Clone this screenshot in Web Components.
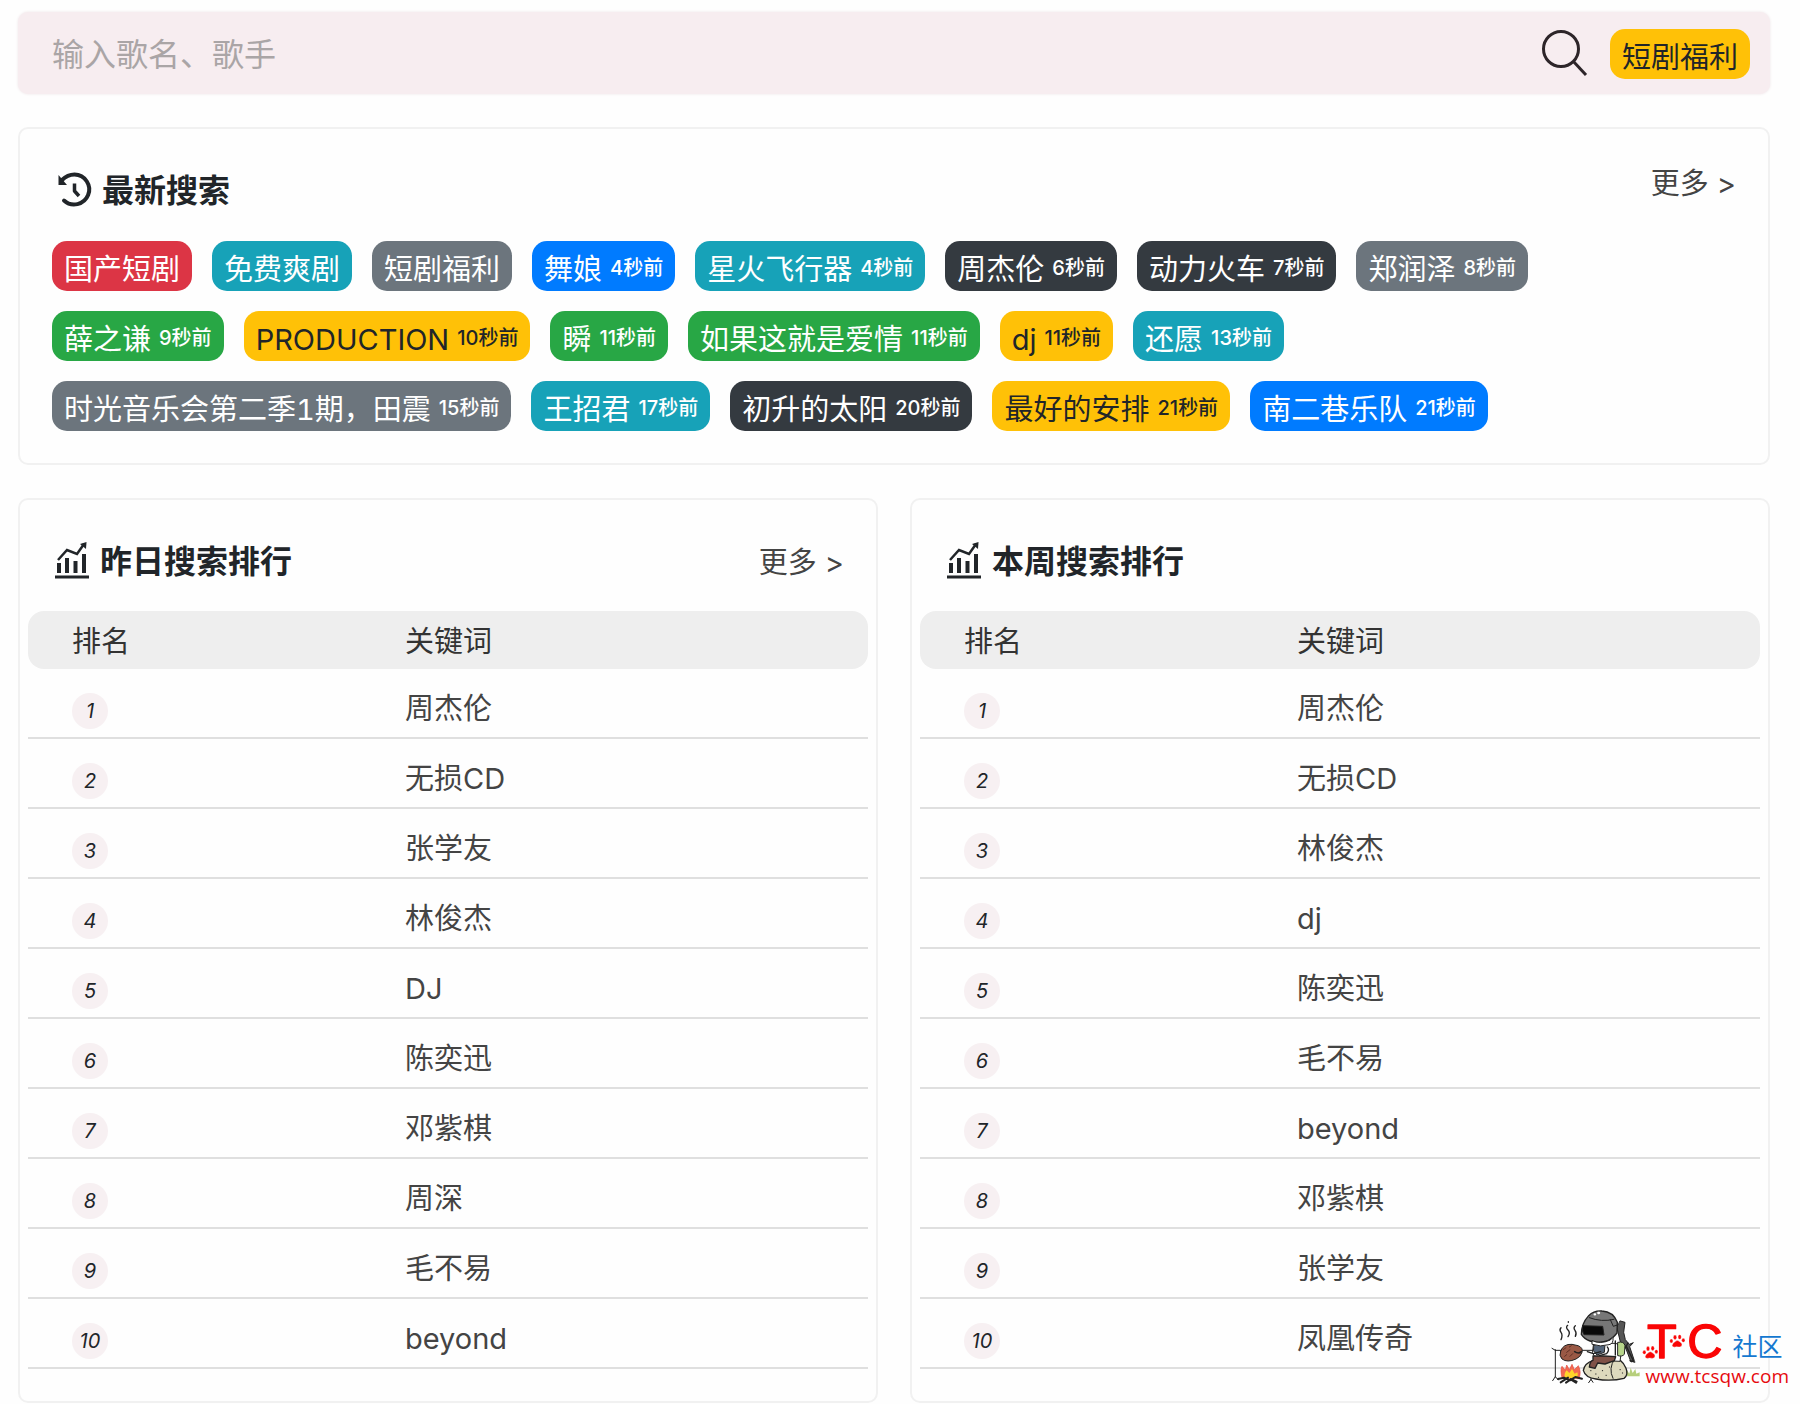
<!DOCTYPE html>
<html lang="zh-CN">
<head>
<meta charset="utf-8">
<meta name="viewport" content="width=device-width, initial-scale=1">
<title>音乐搜索</title>
<style>
  body {
    margin: 0;
    background: #fefefe;
    color: #212529;
    font: 29px/40px Inter, "Noto Sans CJK SC", sans-serif;
  }
</style>
</head>
<body>
<music-page></music-page>

<template id="t-page">
  <style>
    :host { display: block; position: relative; padding: 12px 30px 2px 18px; }
    main { display: flex; flex-direction: column; gap: 33px; }
    .ranks { display: grid; grid-template-columns: 1fr 1fr; gap: 32px; }
    .tags { display: flex; flex-wrap: wrap; row-gap: 20px; }
    site-mark { position: absolute; right: 11px; bottom: 17px; }
  </style>
  <main>
    <search-bar></search-bar>
    <panel-card heading="最新搜索" icon="history" more>
      <div class="tags"></div>
    </panel-card>
    <div class="ranks">
      <panel-card heading="昨日搜索排行" icon="chart" more flush>
        <rank-table items="周杰伦|无损CD|张学友|林俊杰|DJ|陈奕迅|邓紫棋|周深|毛不易|beyond"></rank-table>
      </panel-card>
      <panel-card heading="本周搜索排行" icon="chart" flush>
        <rank-table items="周杰伦|无损CD|林俊杰|dj|陈奕迅|毛不易|beyond|邓紫棋|张学友|凤凰传奇"></rank-table>
      </panel-card>
    </div>
  </main>
  <site-mark></site-mark>
</template>

<template id="t-search">
  <style>
    :host { display: block; }
    form {
      display: flex; align-items: center; box-sizing: border-box; height: 82px;
      padding: 2px 20px 0 34px; border-radius: 10px; background: #f7edf0;
      box-shadow: 0 0 3px #eee4e7;
    }
    input {
      flex: 1; min-width: 0; padding: 2px 0 0; border: 0; outline: 0; background: none;
      color: #212529; font: inherit; font-size: 32px; line-height: 48px;
    }
    input::placeholder { color: #aaa5a6; opacity: 1; }
    button { display: block; margin: 0 22px 0 0; padding: 0; border: 0; background: none; cursor: pointer; }
    svg { display: block; width: 48px; height: 48px; }
    tag-chip { margin-right: 0; }
  </style>
  <form onsubmit="return false">
    <input type="text" placeholder="输入歌名、歌手" aria-label="输入歌名、歌手">
    <button type="submit" aria-label="搜索">
      <svg viewBox="0 2 48 48" fill="none" stroke="#2d2529" stroke-width="3">
        <circle cx="21" cy="21" r="17.500"/><path d="M33 33 46 47"/>
      </svg>
    </button>
    <tag-chip color="yellow">短剧福利</tag-chip>
  </form>
</template>

<template id="t-chip">
  <style>
    :host { display: block; margin-right: 20px; }
    a {
      display: flex; align-items: center; gap: 8px; box-sizing: border-box; height: 50px;
      padding: 7px 12px 0; border-radius: 15px; color: #fff; text-decoration: none; white-space: nowrap;
    }
    span { font-variant-numeric: tabular-nums; }
    small { font-size: 20px; font-weight: 500; line-height: 40px; padding-bottom: 4px; }
    :host([color=red]) a { background: #dc3545; }
    :host([color=teal]) a { background: #17a2b8; }
    :host([color=gray]) a { background: #6c757d; }
    :host([color=blue]) a { background: #007bff; }
    :host([color=dark]) a { background: #343a40; }
    :host([color=green]) a { background: #28a745; }
    :host([color=yellow]) a { background: #ffc107; color: #212529; }
  </style>
  <a href="#"><span><slot></slot></span></a>
</template>

<template id="t-card">
  <style>
    :host {
      display: block; box-sizing: border-box; padding: 39px 32px 32px; border: 2px solid #f1f1f1;
      border-radius: 10px; background: #fefefe;
    }
    header { display: flex; align-items: flex-start; justify-content: space-between; margin-bottom: 27px; }
    h2 { display: flex; align-items: center; margin: 0; font-size: 32px; font-weight: 700; line-height: 46px; }
    svg { display: block; width: 40px; height: 40px; margin: 0 8px 0 2px; }
    a { color: #444; text-decoration: none; line-height: 40px; margin-top: -4px; }
    :host([flush]) { padding: 39px 8px 32px; }
    :host([flush]) header { margin: 0 24px 26px; align-items: center; }
    :host([flush]) svg { margin: 0 7px 0 1px; }
    :host([flush]) a { margin: 2px 0 0; }
  </style>
  <header><h2></h2></header>
  <slot></slot>
</template>

<template id="t-rank">
  <style>
    :host { display: block; }
    table { width: 100%; border-collapse: separate; border-spacing: 0; table-layout: fixed; }
    th, td { box-sizing: border-box; text-align: left; font-weight: 400; vertical-align: middle; }
    th { height: 58px; padding: 3px 0 0 41px; background: #eee; color: #333; }
    td { height: 70px; padding: 12px 0 0 41px; border-bottom: 2px solid #dfdfdf; }
    th:first-child, td:first-child { width: 40%; padding-left: 44px; }
    th:first-child { border-radius: 16px 0 0 16px; }
    th:last-child { border-radius: 0 16px 16px 0; }
    em {
      display: block; width: 36px; height: 36px; margin-top: 4px; border-radius: 50%; background: #f7f0f2;
      font-size: 20px; line-height: 36px; text-align: center;
    }
    a { color: #444; text-decoration: none; }
  </style>
  <table>
    <thead><tr><th>排名</th><th>关键词</th></tr></thead>
    <tbody></tbody>
  </table>
</template>

<template id="t-mark">
  <style>
    :host { display: flex; pointer-events: none; }
    svg { display: block; flex: none; overflow: visible; }
    .hero { width: 92px; height: 76px; margin-right: 3px; }
    .name { display: flex; align-items: flex-end; height: 63px; color: #1478d0; font-size: 25px; line-height: 50px; }
    .tc { width: 83px; height: 63px; margin-right: 4px; }
    .url { display: block; margin-top: -8px; color: #e60a0f; font: 19px/24px "Open Sans", sans-serif; }
  </style>
  <svg class="hero" viewBox="18 30 276 228" stroke="#222" stroke-width="3" stroke-linecap="round" stroke-linejoin="round">
    <g fill="none" stroke-width="4">
      <path d="M51 86q-6 6 0 14t0 22M73 68v2M71 79q-7 6 1 14t0 20M94 80q-7 6-1 14t1 18"/>
    </g>
    <path d="M34 152v82M24 148l10 6M34 154h140M26 245l8-12 9 10M141 205v38M134 251l7-10 6 9" fill="none"/>
    <path d="M50 156q8-22 34-20l18 4q16 6 12 20t-18 20q-26 12-42 0-10-10-4-24Z" fill="#9a5945"/>
    <path d="M58 152l8-6M68 160l10-8M78 172l8-8M62 172l6-5M76 144l6-4" fill="none" stroke="#5f3025"/>
    <path d="M92 158q12 8 20 0" fill="none" stroke-width="5"/>
    <path d="M54 236q-6-24 0-34l10 12 4-16 8 14 8-16 7 16 12-12q10 20 2 38Z" fill="#f36a52" stroke="#e3483d" stroke-width="2"/>
    <path d="M62 236q-2-14 6-22l8 8 8-12 8 14 8-4q4 10-4 18Z" fill="#ffd42a" stroke="none"/>
    <path d="M42 240l18-4 18 8 16-10 20 5M50 250l22-14M66 251l14-10 16 10M98 248l-18-8" fill="none" stroke-width="6"/>
    <path d="M248 232v-20l8 12 4-18 6 16 8-12 3 14 10-4v12Z" fill="#b7cf7c" stroke="none"/>
    <path d="M229 66l14 4-4 30 5 22 12 14 12-5-11 12 14 42-10 4-16-42-14-10-12-50Z" fill="#555"/>
    <path d="M246 140l22 45M252 132l-8 14M258 185l14 4" fill="none" stroke-width="4"/>
    <path d="M118 214q4-22 30-30l50-8q36 0 48 32 8 20-6 30-40 10-84 2-32-4-38-26Z" fill="#ddd9bd" stroke-width="4"/>
    <path d="M212 180q-20 28-5 58M140 215h1M155 225h1M175 215h1M186 229h1M228 212h1M235 222h1M163 235h1M196 204h1" fill="none"/>
    <path d="M150 133h66l18 12-6 42-70-3-12-22Z" fill="#fff"/>
    <path d="M151 138l32-2-2 24-22 8-10-12Z" fill="#54657a"/>
    <path d="M222 130q18-4 21 10l-2 26q-7 8-19 4Z" fill="#b7d58b"/>
    <path d="M214 126v42M190 144q8 8-2 20l-22 6M130 158l18 6 22-6" fill="none" stroke-width="4"/>
    <path d="M147 171h32l36 2-4 12-28 10-22-3-8 16-17-4q2-18 11-20Z" fill="#805247" stroke-width="4"/>
    <path d="M138 126q-17-6-26-20 0-32 22-56 16-16 40-14 34 2 46 34l-1 32q-14 18-30 24-28 8-51 0Z" fill="#777" stroke-width="4"/>
    <path d="M116 80l60 2 4 26-60-1q-8-12-4-27Z" fill="#090909"/>
    <path d="M136 56q36 14 74 5M199 62l9 20 12-4" fill="none"/>
    <path d="M152 46h1M163 42h2" stroke="#fff" stroke-width="7"/>
    <path d="M145 125q24 12 54-2l8-8q2 20-12 22-26 8-50-1Z" fill="#fff"/>
  </svg>
  <div>
    <div class="name">
      <svg class="tc" viewBox="18 0 249 189" fill="#fa0505">
        <g font-family="Liberation Sans, sans-serif" font-size="146" stroke="#fa0505" stroke-width="4" stroke-linejoin="round">
          <text x="24" y="147">T</text><text x="145" y="147">C</text>
        </g>
        <g id="paw" stroke="#fff" stroke-width="1">
          <path d="M18 144q2-9 9-12 7-7 14 0 10 5 6 13-4 5-15 2-10 4-14-3Z"/>
          <ellipse cx="16" cy="130" rx="5" ry="6"/><ellipse cx="27" cy="119" rx="5" ry="7"/>
          <ellipse cx="41" cy="118" rx="5" ry="7"/><ellipse cx="52" cy="128" rx="5" ry="6"/>
        </g>
        <use href="#paw" x="81" y="-34"/>
      </svg>
      <span>社区</span>
    </div>
    <span class="url">www.tcsqw.com</span>
  </div>
</template>

<script>
  class Base extends HTMLElement {
    constructor(id) {
      super();
      this.attachShadow({ mode: 'open' }).append(document.getElementById(id).content.cloneNode(true));
    }
    $(sel) { return this.shadowRoot.querySelector(sel); }
  }

  const ICONS = {
    history: '<svg viewBox="0 0 40 40" fill="none" stroke="#212529" stroke-width="4"><path d="M8 9C12 5 16 3.500 20.500 3.500a15 15 0 1 1-10.500 26" stroke-linecap="round"/><path d="M4.500 4v10h8.500Z" fill="#212529" stroke="none"/><path d="M20.500 12.500v7.500l4.500 5" stroke-width="3.500" stroke-linejoin="round"/></svg>',
    chart: '<svg viewBox="1 2 40 40" fill="none" stroke="#212529"><path d="M3 37h34" stroke-width="3"/><path d="M7 33V23M15 33V18M23.500 33V21M32 33V14" stroke-width="4"/><path d="M6 20l9-10 10 4 7-10" stroke-width="2.500"/><path d="M28 4l6.500-2-.5 7Z" fill="#212529" stroke="none"/></svg>'
  };

  const TAGS = [
    ['red', '国产短剧'], ['teal', '免费爽剧'], ['gray', '短剧福利'], ['blue', '舞娘', '4秒前'],
    ['teal', '星火飞行器', '4秒前'], ['dark', '周杰伦', '6秒前'], ['dark', '动力火车', '7秒前'],
    ['gray', '郑润泽', '8秒前'], ['green', '薛之谦', '9秒前'], ['yellow', 'PRODUCTION', '10秒前'],
    ['green', '瞬', '11秒前'], ['green', '如果这就是爱情', '11秒前'], ['yellow', 'dj', '11秒前'],
    ['teal', '还愿', '13秒前'], ['gray', '时光音乐会第二季1期，田震', '15秒前'], ['teal', '王招君', '17秒前'],
    ['dark', '初升的太阳', '20秒前'], ['yellow', '最好的安排', '21秒前'], ['blue', '南二巷乐队', '21秒前']
  ];

  customElements.define('tag-chip', class extends Base {
    constructor() { super('t-chip'); }
    connectedCallback() {
      const ago = this.getAttribute('ago');
      if (ago && !this.$('small')) {
        const s = document.createElement('small');
        s.textContent = ago;
        this.$('a').append(s);
      }
    }
  });

  customElements.define('search-bar', class extends Base {
    constructor() { super('t-search'); }
  });

  customElements.define('panel-card', class extends Base {
    constructor() { super('t-card'); }
    connectedCallback() {
      const h = this.$('h2');
      h.innerHTML = ICONS[this.getAttribute('icon')] + '<span></span>';
      h.lastChild.textContent = this.getAttribute('heading');
      if (this.hasAttribute('more') && !this.$('a')) {
        const a = document.createElement('a');
        a.href = '#';
        a.textContent = '更多 >';
        this.$('header').append(a);
      }
    }
  });

  customElements.define('rank-table', class extends Base {
    constructor() { super('t-rank'); }
    connectedCallback() {
      this.$('tbody').innerHTML = this.getAttribute('items').split('|')
        .map((name, i) => `<tr><td><em>${i + 1}</em></td><td><a href="#">${name}</a></td></tr>`).join('');
    }
  });

  customElements.define('site-mark', class extends Base {
    constructor() { super('t-mark'); }
  });

  customElements.define('music-page', class extends Base {
    constructor() { super('t-page'); }
    connectedCallback() {
      this.$('.tags').replaceChildren(...TAGS.map(([color, label, ago]) => {
        const chip = document.createElement('tag-chip');
        chip.setAttribute('color', color);
        if (ago) chip.setAttribute('ago', ago);
        chip.textContent = label;
        return chip;
      }));
    }
  });
</script>
</body>
</html>
